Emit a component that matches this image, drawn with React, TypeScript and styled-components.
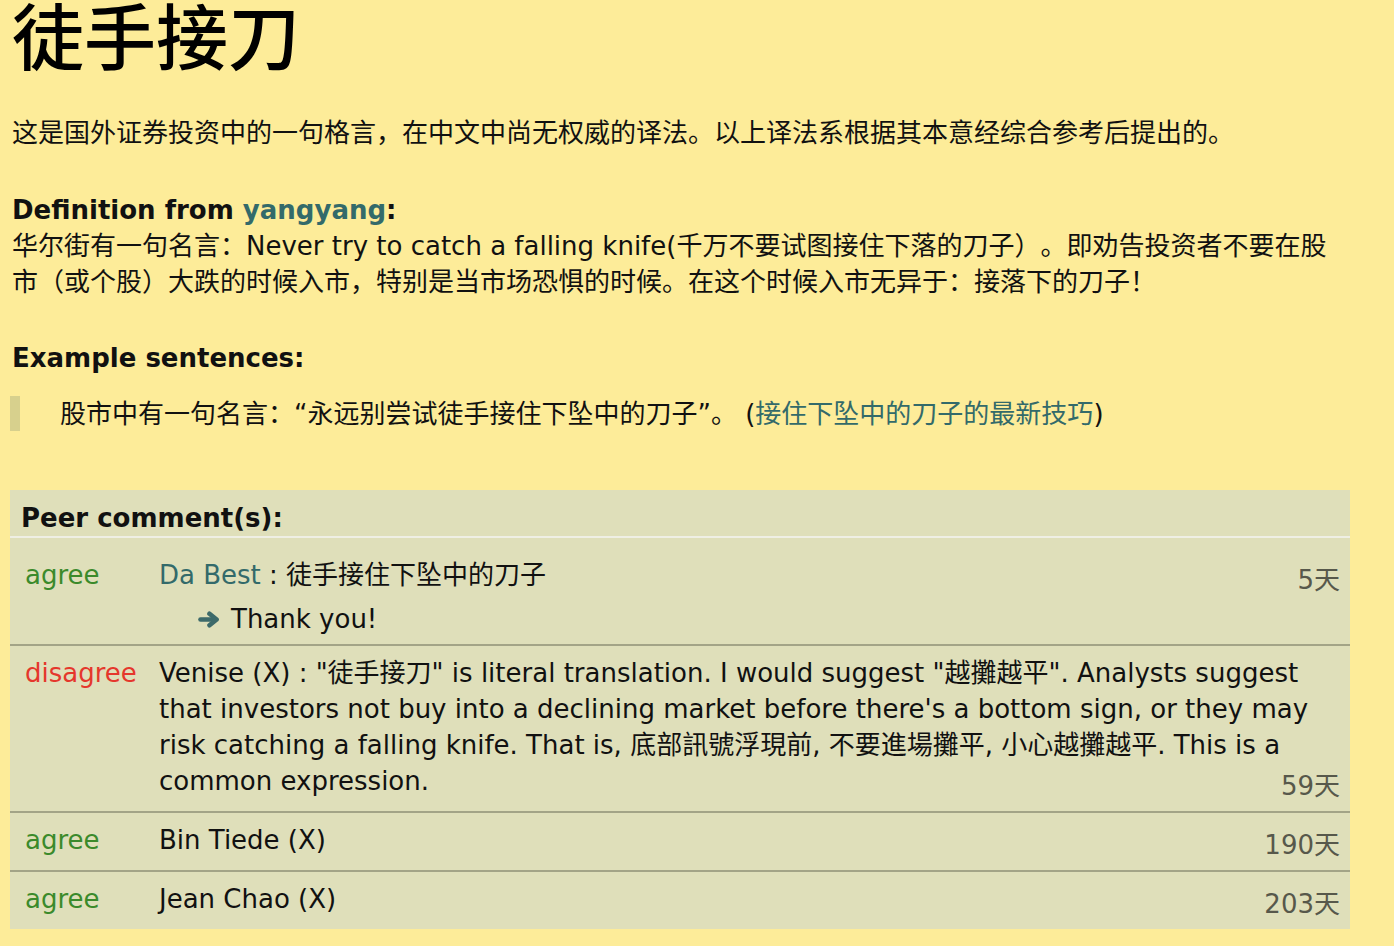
import React from "react";
import styled, { createGlobalStyle } from "styled-components";

const FONT = `"DejaVu Sans", "Noto Sans CJK SC", sans-serif`;

const GlobalStyle = createGlobalStyle`
  html, body {
    margin: 0;
    padding: 0;
    background: #fdec99;
  }
  body {
    font-family: ${FONT};
    font-size: 26px;
    line-height: 36px;
    color: #111;
    text-spacing-trim: space-all;
  }
`;

const Page = styled.div`
  padding: 0 0 17px 10px;
  width: 1340px;
`;

const Title = styled.h1`
  margin: -3px 0 0 2px;
  font-family: "Noto Sans CJK SC", sans-serif;
  font-size: 72px;
  line-height: 72px;
  font-weight: 500;
  color: #000;
`;

const Paragraph = styled.p<{ $top: number }>`
  margin: ${(p) => p.$top}px 0 0 2px;
`;

const SectionHead = styled.div<{ $top: number }>`
  margin: ${(p) => p.$top}px 0 0 2px;
  font-weight: bold;
`;

const Link = styled.a<{ $bold?: boolean }>`
  color: #336a6a;
  text-decoration: none;
  font-weight: ${(p) => (p.$bold ? "bold" : "normal")};
`;

const Quote = styled.blockquote`
  margin: 20px 0 0 0;
  padding: 0 0 0 40px;
  border-left: 10px solid #d7d08d;
  height: 35px;
  line-height: 36px;
`;

const Box = styled.section`
  margin-top: 59px;
  background: #dfdfba;
`;

const BoxHead = styled.div`
  padding: 10px 11px 0;
  font-weight: bold;
  border-bottom: 2px solid #efefe4;
`;

const Row = styled.div<{ $first?: boolean }>`
  display: grid;
  grid-template-columns: 134px 1fr;
  padding: ${(p) => (p.$first ? 19 : 9)}px 10px 7px 15px;
  border-top: ${(p) => (p.$first ? "none" : "2px solid #a3a487")};
`;

const Verdict = styled.div<{ $agree: boolean }>`
  color: ${(p) => (p.$agree ? "#3b8a2b" : "#e5372c")};
`;

const Body = styled.div`
  display: flow-root;
`;

const When = styled.span`
  float: right;
  margin-left: 12px;
  padding-top: 5px;
  color: #57584b;
`;

const Reply = styled.div`
  display: flex;
  align-items: center;
  gap: 11px;
  margin-top: 8px;
  padding-left: 39px;
  clear: both;
`;

const ReplyIcon = styled.svg`
  width: 22px;
  height: 17px;
  flex: none;
  color: #3d6a6a;
`;

function ArrowIcon() {
  return (
    <ReplyIcon viewBox="0 0 22 17" aria-hidden="true">
      <path d="M2.5 8.5 H17" stroke="currentColor" strokeWidth="4.6" strokeLinecap="round" fill="none" />
      <path
        d="M11.5 2.8 L18.6 8.5 L11.5 14.2"
        stroke="currentColor"
        strokeWidth="4.6"
        strokeLinecap="round"
        strokeLinejoin="round"
        fill="none"
      />
    </ReplyIcon>
  );
}

type Comment = {
  agree: boolean;
  name: string;
  link?: boolean;
  text?: string;
  when: string;
  reply?: string;
};

const comments: Comment[] = [
  { agree: true, name: "Da Best", link: true, text: "徒手接住下坠中的刀子", when: "5天", reply: "Thank you!" },
  {
    agree: false,
    name: "Venise (X)",
    text:
      '"徒手接刀" is literal translation. I would suggest "越攤越平". Analysts suggest that investors not buy into a declining market before there\'s a bottom sign, or they may risk catching a falling knife. That is, 底部訊號浮現前, 不要進場攤平, 小心越攤越平. This is a common expression.',
    when: "59天",
  },
  { agree: true, name: "Bin Tiede (X)", when: "190天" },
  { agree: true, name: "Jean Chao (X)", when: "203天" },
];

export default function App() {
  return (
    <>
      <GlobalStyle />
      <Page>
        <Title>徒手接刀</Title>
        <Paragraph $top={46}>
          这是国外证券投资中的一句格言，在中文中尚无权威的译法。以上译法系根据其本意经综合参考后提出的。
        </Paragraph>
        <SectionHead $top={41}>
          Definition from <Link $bold>yangyang</Link>:
        </SectionHead>
        <Paragraph $top={0}>
          华尔街有一句名言：Never try to catch a falling knife(千万不要试图接住下落的刀子）。即劝告投资者不要在股市（或个股）大跌的时候入市，特别是当市场恐惧的时候。在这个时候入市无异于：接落下的刀子！
        </Paragraph>
        <SectionHead $top={40}>Example sentences:</SectionHead>
        <Quote>
          股市中有一句名言：“永远别尝试徒手接住下坠中的刀子”。 (<Link>接住下坠中的刀子的最新技巧</Link>)
        </Quote>
        <Box>
          <BoxHead>Peer comment(s):</BoxHead>
          {comments.map((c, i) => (
            <Row key={i} $first={i === 0}>
              <Verdict $agree={c.agree}>{c.agree ? "agree" : "disagree"}</Verdict>
              <Body>
                {c.link ? <Link>{c.name}</Link> : c.name}
                {c.text ? ` : ${c.text}` : ""}
                <When>{c.when}</When>
                {c.reply && (
                  <Reply>
                    <ArrowIcon />
                    <span>{c.reply}</span>
                  </Reply>
                )}
              </Body>
            </Row>
          ))}
        </Box>
      </Page>
    </>
  );
}
